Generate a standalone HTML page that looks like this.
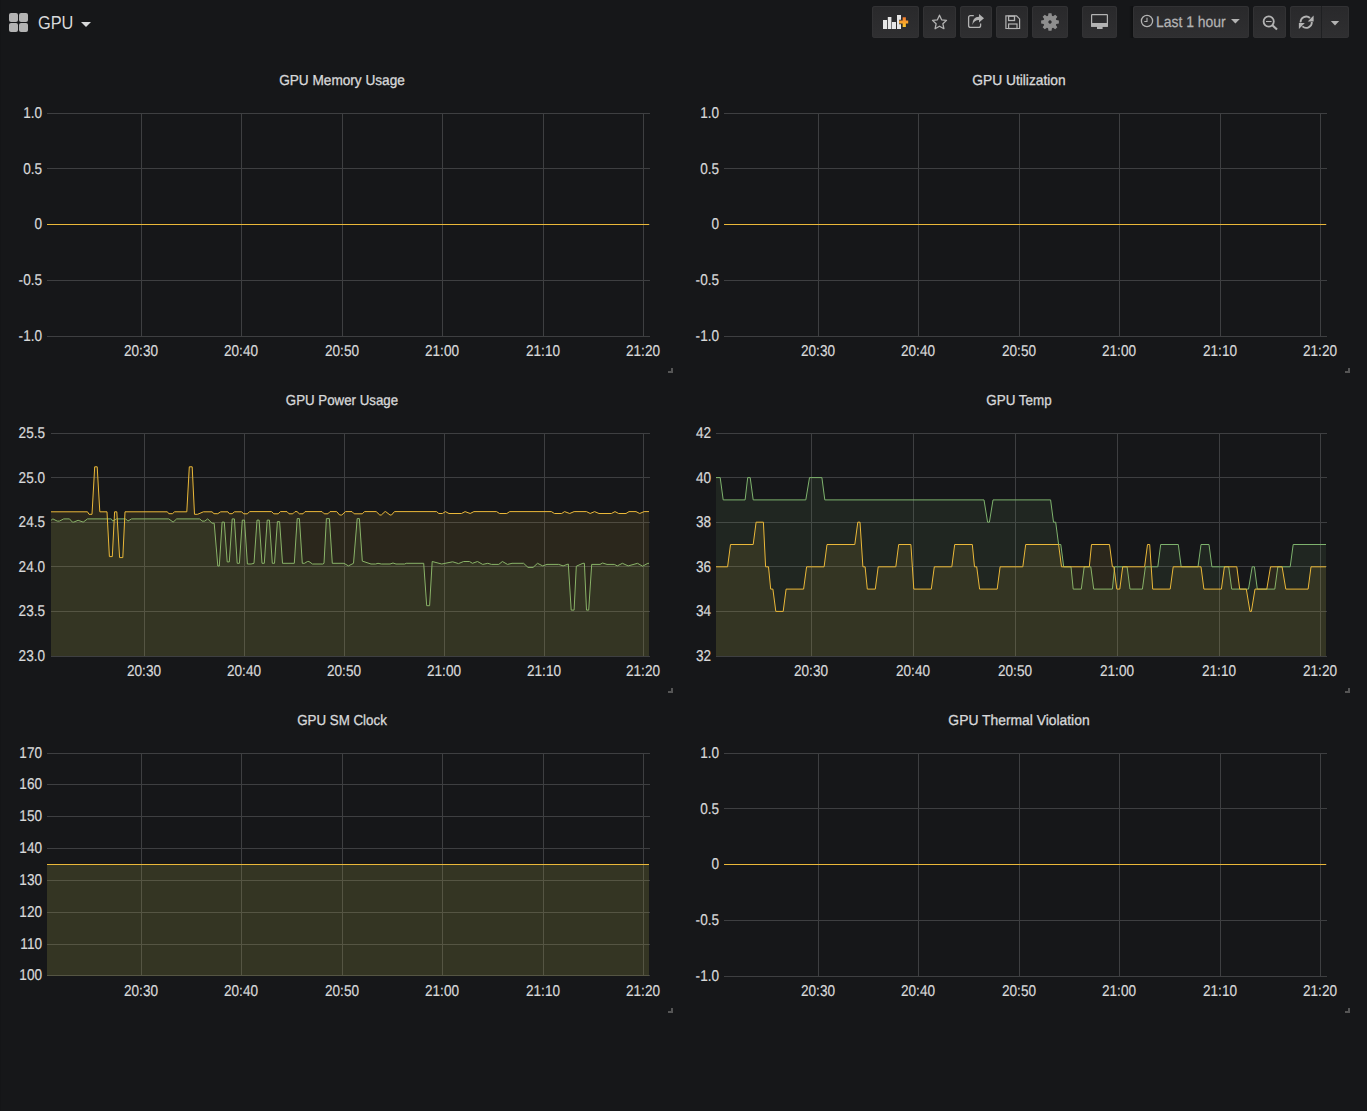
<!DOCTYPE html><html><head><meta charset="utf-8"><style>
html,body{margin:0;padding:0;background:#161719;width:1367px;height:1111px;overflow:hidden;font-family:"Liberation Sans",sans-serif;color:#d8d9da}
.a{position:absolute;white-space:nowrap}
.t{position:absolute;font-size:14.5px;font-weight:400;color:#d8d9da;transform:translateX(-50%) scaleX(0.925);white-space:nowrap;text-rendering:geometricPrecision;-webkit-text-stroke:0.3px #d8d9da;line-height:18px}
.yl{position:absolute;font-size:15.6px;color:#d8d9da;text-align:right;width:40px;line-height:16px;text-rendering:geometricPrecision;-webkit-text-stroke:0.2px #d8d9da;transform:scaleX(0.87);transform-origin:100% 50%}
.xl{position:absolute;font-size:15.6px;color:#d8d9da;width:60px;text-align:center;line-height:16px;text-rendering:geometricPrecision;-webkit-text-stroke:0.2px #d8d9da;transform:scaleX(0.87);transform-origin:50% 50%}
.btn{position:absolute;top:6px;height:32px;background:linear-gradient(#29292b,#2f2f31);border-radius:3px;box-shadow:inset 0 0 0 1px #323234}
.rh{position:absolute;width:5px;height:5px;border-right:2px solid #555;border-bottom:2px solid #555;box-sizing:border-box}
svg{position:absolute;left:0;top:0}

</style></head><body>
<div class="a" style="left:9px;top:13px;width:20px;height:20px">
<div style="position:absolute;left:0px;top:0px;width:9px;height:9px;background:#b3b3b3;border-radius:2px"></div>
<div style="position:absolute;left:10px;top:0px;width:9px;height:9px;background:#b3b3b3;border-radius:2px"></div>
<div style="position:absolute;left:0px;top:10px;width:9px;height:9px;background:#b3b3b3;border-radius:2px"></div>
<div style="position:absolute;left:10px;top:10px;width:9px;height:9px;background:#b3b3b3;border-radius:2px"></div>
</div>
<div class="a" style="left:38px;top:12px;font-size:19px;line-height:22px;color:#d8d9da;transform:scaleX(0.86);transform-origin:0 0">GPU</div>
<div class="a" style="left:81px;top:22px;width:0;height:0;border-left:5px solid transparent;border-right:5px solid transparent;border-top:5px solid #d8d9da"></div>
<div class="btn" style="left:872px;width:47px"></div>
<div class="btn" style="left:923px;width:33px"></div>
<div class="btn" style="left:960px;width:32px"></div>
<div class="btn" style="left:996px;width:32px"></div>
<div class="btn" style="left:1032px;width:36px"></div>
<div class="btn" style="left:1082px;width:35px"></div>
<div class="btn" style="left:1133px;width:116px"></div>
<div class="btn" style="left:1253px;width:33px"></div>
<div class="btn" style="left:1290px;width:59px"></div>
<div class="a" style="left:1129px;top:6px;width:4px;height:32px;background:linear-gradient(90deg,#161719,#0e0f10)"></div>
<div class="a" style="left:0;top:0;width:1px;height:1111px;background:#141517"></div>
<div class="a" style="left:1321px;top:6px;width:1px;height:32px;background:#1f2022"></div>
<div class="a" style="left:1156px;top:12.5px;font-size:15.4px;line-height:20px;color:#b3b3b3;text-rendering:geometricPrecision;-webkit-text-stroke:0.25px #b3b3b3;transform:scaleX(0.905);transform-origin:0 0">Last 1 hour</div>
<svg width="1367" height="1111" viewBox="0 0 1367 1111">
<defs><linearGradient id="pg" x1="0" y1="0" x2="0" y2="1"><stop offset="0" stop-color="#f47a2f"/><stop offset="1" stop-color="#fdc72b"/></linearGradient></defs>
<g fill="#e6e6e6"><rect x="883" y="20" width="4" height="9"/><rect x="887.8" y="17" width="3.6" height="12"/><rect x="892" y="22" width="4" height="7"/><rect x="897" y="15" width="4" height="14"/></g>
<path d="M904.25 17.2v9.7M899.1 22h9.1" stroke="#28282a" stroke-width="4.6"/>
<path d="M904.25 17.2v9.7M899.1 22h9.1" stroke="url(#pg)" stroke-width="3.2"/>
<path d="M939.5 15.2l2.1 4.6 4.9.6-3.6 3.4 1 4.9-4.4-2.5-4.4 2.5 1-4.9-3.6-3.4 4.9-.6z" fill="none" stroke="#b3b3b3" stroke-width="1.3" stroke-linejoin="round"/>
<path d="M973.8 15.6H970.6a2 2 0 0 0-2 2V25.4a2 2 0 0 0 2 2H978.6a2 2 0 0 0 2-2V23.6" fill="none" stroke="#b3b3b3" stroke-width="1.3"/>
<path d="M972.3 25Q972.3 17 979 16.8L979 14L984 18.3L979 22.4L979 19.9Q974.3 19.9 972.3 25Z" fill="#b3b3b3"/>
<path d="M1005.9 15.9H1016.6L1019.6 18.9V28.5H1005.9Z" fill="none" stroke="#b3b3b3" stroke-width="1.2"/>
<rect x="1008.6" y="16.2" width="5.9" height="4.3" fill="none" stroke="#b3b3b3" stroke-width="1.3"/><rect x="1008.6" y="24" width="8.4" height="4.5" fill="none" stroke="#b3b3b3" stroke-width="1.2"/>
<path d="M1056.31 20.05 L1058.87 20.48 L1058.87 23.52 L1056.31 23.95 L1055.84 25.08 L1057.35 27.20 L1055.20 29.35 L1053.08 27.84 L1051.95 28.31 L1051.52 30.87 L1048.48 30.87 L1048.05 28.31 L1046.92 27.84 L1044.80 29.35 L1042.65 27.20 L1044.16 25.08 L1043.69 23.95 L1041.13 23.52 L1041.13 20.48 L1043.69 20.05 L1044.16 18.92 L1042.65 16.80 L1044.80 14.65 L1046.92 16.16 L1048.05 15.69 L1048.48 13.13 L1051.52 13.13 L1051.95 15.69 L1053.08 16.16 L1055.20 14.65 L1057.35 16.80 L1055.84 18.92 z M1050 20.3a1.7 1.7 0 1 0 0.01 0z" fill="#8e8e8e" fill-rule="evenodd"/>
<rect x="1091.6" y="14.6" width="15.8" height="11.6" rx="0.6" fill="none" stroke="#b3b3b3" stroke-width="1.2"/><rect x="1091" y="23" width="17" height="3.8" fill="#b3b3b3"/><rect x="1097" y="26.5" width="5.6" height="2.5" fill="#b3b3b3"/>
<circle cx="1147" cy="21" r="5.6" fill="none" stroke="#b3b3b3" stroke-width="1.3"/><path d="M1147 17.8v3.7h-2.7" fill="none" stroke="#b3b3b3" stroke-width="1.1"/>
<path d="M1231 19.1h8.8l-4.4 4.5z" fill="#b3b3b3"/>
<circle cx="1268.7" cy="21.5" r="5.1" fill="none" stroke="#b3b3b3" stroke-width="1.8"/><path d="M1272.4 25.2l4.6 4.4" stroke="#b3b3b3" stroke-width="2.1"/><path d="M1266 21.5h5.6" stroke="#b3b3b3" stroke-width="1.1"/>
<path d="M1300.60 22.40A5.6 5.6 0 0 1 1309.95 18.04" fill="none" stroke="#b3b3b3" stroke-width="1.9"/><path d="M1313.6 15.5V21.4H1307.7z" fill="#b3b3b3"/>
<path d="M1311.80 22.00A5.6 5.6 0 0 1 1302.45 26.36" fill="none" stroke="#b3b3b3" stroke-width="1.9"/><path d="M1298.9 28.9V23H1304.8z" fill="#b3b3b3"/>
<path d="M1330.8 21h8.4l-4.2 4.4z" fill="#b3b3b3"/>
<path d="M47.0 113.5H650.0M47.0 168.5H650.0M47.0 224.5H650.0M47.0 280.5H650.0M47.0 336.5H650.0M141.5 113.0V337.0M241.5 113.0V337.0M342.5 113.0V337.0M442.5 113.0V337.0M543.5 113.0V337.0M643.5 113.0V337.0" stroke="#3e3f41" stroke-width="1" fill="none"/>
<path d="M47.0 224.5H649.0" stroke="#EAB839" stroke-width="1"/>
<path d="M724.0 113.5H1327.0M724.0 168.5H1327.0M724.0 224.5H1327.0M724.0 280.5H1327.0M724.0 336.5H1327.0M818.5 113.0V337.0M918.5 113.0V337.0M1019.5 113.0V337.0M1119.5 113.0V337.0M1220.5 113.0V337.0M1320.5 113.0V337.0" stroke="#3e3f41" stroke-width="1" fill="none"/>
<path d="M724.0 224.5H1326.0" stroke="#EAB839" stroke-width="1"/>
<path d="M51.0 433.5H650.0M51.0 477.5H650.0M51.0 522.5H650.0M51.0 566.5H650.0M51.0 611.5H650.0M51.0 656.5H650.0M144.5 433.0V657.0M244.5 433.0V657.0M344.5 433.0V657.0M444.5 433.0V657.0M544.5 433.0V657.0M643.5 433.0V657.0" stroke="#3e3f41" stroke-width="1" fill="none"/>
<path d="M51.0 656.0 L51.0,520.3 52.9,518.9 57.2,521.1 59.4,521.1 63.7,518.9 69.5,518.9 72.4,522.1 73.8,522.1 78.1,520.3 83.2,522.1 87.5,518.9 111.3,518.9 112.7,521.1 116.3,518.9 125.7,518.9 127.9,521.1 131.5,518.9 168.8,518.9 173.1,522.1 176.7,518.9 199.8,518.9 202.0,521.1 204.8,521.1 207.7,518.9 212.0,523.2 214.2,523.2 217.8,566.0 219.3,566.0 222.1,522.1 224.3,522.1 227.2,561.9 229.3,561.9 232.2,518.9 234.4,518.9 237.2,563.3 239.4,563.3 242.3,520.1 244.5,520.1 247.4,564.0 251.1,564.0 254.0,563.3 257.0,520.1 259.1,520.1 262.0,563.3 264.3,563.3 267.2,520.1 269.4,520.1 272.3,563.3 274.5,563.3 277.4,521.6 279.6,521.6 282.5,563.3 294.3,563.3 297.2,518.6 299.4,518.6 302.3,563.3 304.5,563.3 307.4,561.5 308.9,561.5 312.5,564.0 322.8,564.0 324.0,563.3 326.4,518.6 329.4,518.6 332.3,563.3 344.0,563.3 348.4,565.9 353.5,563.3 357.2,518.6 359.4,518.6 362.3,561.1 371.0,564.0 375.5,564.0 378.0,563.3 381.3,564.0 390.0,564.0 393.0,563.0 396.0,564.0 404.7,564.0 406.2,563.3 423.7,563.3 426.7,605.7 429.6,605.7 432.2,561.5 441.7,564.0 452.7,561.8 458.5,563.6 463.6,561.5 469.5,561.5 472.4,563.3 477.5,561.5 482.7,564.4 487.8,563.3 491.4,564.4 498.8,564.4 502.4,561.5 507.5,564.4 512.0,563.3 523.6,563.3 528.0,567.4 533.1,567.4 537.5,563.3 542.7,565.9 547.0,564.4 558.7,564.4 563.1,565.9 568.3,564.0 571.2,610.1 574.1,610.1 576.3,566.2 582.9,563.3 584.4,563.3 586.5,610.1 588.7,610.1 591.7,564.4 600.0,564.4 602.6,563.0 607.0,564.4 614.3,564.4 617.3,565.9 622.4,563.3 628.2,565.9 637.5,563.3 642.6,566.2 647.8,563.3 649.0,563.3 L649.0 656.0 Z" fill="rgba(126,178,109,0.1)"/>
<polyline points="51.0,520.3 52.9,518.9 57.2,521.1 59.4,521.1 63.7,518.9 69.5,518.9 72.4,522.1 73.8,522.1 78.1,520.3 83.2,522.1 87.5,518.9 111.3,518.9 112.7,521.1 116.3,518.9 125.7,518.9 127.9,521.1 131.5,518.9 168.8,518.9 173.1,522.1 176.7,518.9 199.8,518.9 202.0,521.1 204.8,521.1 207.7,518.9 212.0,523.2 214.2,523.2 217.8,566.0 219.3,566.0 222.1,522.1 224.3,522.1 227.2,561.9 229.3,561.9 232.2,518.9 234.4,518.9 237.2,563.3 239.4,563.3 242.3,520.1 244.5,520.1 247.4,564.0 251.1,564.0 254.0,563.3 257.0,520.1 259.1,520.1 262.0,563.3 264.3,563.3 267.2,520.1 269.4,520.1 272.3,563.3 274.5,563.3 277.4,521.6 279.6,521.6 282.5,563.3 294.3,563.3 297.2,518.6 299.4,518.6 302.3,563.3 304.5,563.3 307.4,561.5 308.9,561.5 312.5,564.0 322.8,564.0 324.0,563.3 326.4,518.6 329.4,518.6 332.3,563.3 344.0,563.3 348.4,565.9 353.5,563.3 357.2,518.6 359.4,518.6 362.3,561.1 371.0,564.0 375.5,564.0 378.0,563.3 381.3,564.0 390.0,564.0 393.0,563.0 396.0,564.0 404.7,564.0 406.2,563.3 423.7,563.3 426.7,605.7 429.6,605.7 432.2,561.5 441.7,564.0 452.7,561.8 458.5,563.6 463.6,561.5 469.5,561.5 472.4,563.3 477.5,561.5 482.7,564.4 487.8,563.3 491.4,564.4 498.8,564.4 502.4,561.5 507.5,564.4 512.0,563.3 523.6,563.3 528.0,567.4 533.1,567.4 537.5,563.3 542.7,565.9 547.0,564.4 558.7,564.4 563.1,565.9 568.3,564.0 571.2,610.1 574.1,610.1 576.3,566.2 582.9,563.3 584.4,563.3 586.5,610.1 588.7,610.1 591.7,564.4 600.0,564.4 602.6,563.0 607.0,564.4 614.3,564.4 617.3,565.9 622.4,563.3 628.2,565.9 637.5,563.3 642.6,566.2 647.8,563.3 649.0,563.3" fill="none" stroke="#7EB26D" stroke-width="1" stroke-linejoin="round"/>
<path d="M51.0 656.0 L51.0,511.8 87.5,511.8 89.0,514.3 92.0,514.3 94.7,466.8 97.2,466.8 99.8,511.8 107.0,511.8 109.4,556.6 112.3,556.6 114.6,511.8 116.8,511.8 119.6,557.6 122.8,557.6 125.0,511.8 167.4,511.8 168.8,513.7 172.4,513.7 174.6,511.8 186.8,511.8 189.3,466.8 192.2,466.8 194.5,514.3 197.6,514.3 203.4,511.8 212.0,511.8 214.0,513.7 217.8,513.7 220.7,511.8 227.9,511.8 229.3,513.7 232.2,513.7 234.5,511.8 241.5,511.8 243.8,513.8 247.4,513.8 249.6,511.6 271.6,511.6 273.8,513.8 278.2,513.8 280.4,511.6 287.0,511.6 289.0,513.8 292.8,513.8 295.0,511.6 297.0,511.6 299.4,513.8 303.0,513.8 305.0,511.6 322.0,511.6 324.2,513.8 327.9,513.8 330.0,511.6 336.7,511.6 339.6,515.0 341.8,515.0 345.5,511.6 352.0,511.6 354.2,513.8 362.3,513.8 364.5,511.6 376.2,511.6 379.8,515.0 381.3,515.0 385.0,511.6 385.7,511.6 390.0,515.0 391.5,515.0 394.5,511.6 436.6,511.6 438.8,513.5 442.4,513.5 445.4,511.6 449.0,513.5 461.5,513.5 465.1,511.6 470.2,513.5 473.9,511.6 496.6,511.6 499.5,513.5 506.8,513.5 509.7,511.6 551.4,511.6 554.4,513.5 561.7,513.5 564.6,511.6 569.7,513.5 574.1,511.6 586.5,511.6 590.2,513.5 594.6,511.6 599.0,513.5 611.4,513.5 615.0,511.6 618.7,513.5 626.0,513.5 629.0,511.6 636.0,511.6 639.7,513.5 644.1,511.6 649.0,511.6 L649.0 656.0 Z" fill="rgba(234,184,57,0.1)"/>
<polyline points="51.0,511.8 87.5,511.8 89.0,514.3 92.0,514.3 94.7,466.8 97.2,466.8 99.8,511.8 107.0,511.8 109.4,556.6 112.3,556.6 114.6,511.8 116.8,511.8 119.6,557.6 122.8,557.6 125.0,511.8 167.4,511.8 168.8,513.7 172.4,513.7 174.6,511.8 186.8,511.8 189.3,466.8 192.2,466.8 194.5,514.3 197.6,514.3 203.4,511.8 212.0,511.8 214.0,513.7 217.8,513.7 220.7,511.8 227.9,511.8 229.3,513.7 232.2,513.7 234.5,511.8 241.5,511.8 243.8,513.8 247.4,513.8 249.6,511.6 271.6,511.6 273.8,513.8 278.2,513.8 280.4,511.6 287.0,511.6 289.0,513.8 292.8,513.8 295.0,511.6 297.0,511.6 299.4,513.8 303.0,513.8 305.0,511.6 322.0,511.6 324.2,513.8 327.9,513.8 330.0,511.6 336.7,511.6 339.6,515.0 341.8,515.0 345.5,511.6 352.0,511.6 354.2,513.8 362.3,513.8 364.5,511.6 376.2,511.6 379.8,515.0 381.3,515.0 385.0,511.6 385.7,511.6 390.0,515.0 391.5,515.0 394.5,511.6 436.6,511.6 438.8,513.5 442.4,513.5 445.4,511.6 449.0,513.5 461.5,513.5 465.1,511.6 470.2,513.5 473.9,511.6 496.6,511.6 499.5,513.5 506.8,513.5 509.7,511.6 551.4,511.6 554.4,513.5 561.7,513.5 564.6,511.6 569.7,513.5 574.1,511.6 586.5,511.6 590.2,513.5 594.6,511.6 599.0,513.5 611.4,513.5 615.0,511.6 618.7,513.5 626.0,513.5 629.0,511.6 636.0,511.6 639.7,513.5 644.1,511.6 649.0,511.6" fill="none" stroke="#EAB839" stroke-width="1" stroke-linejoin="round"/>
<path d="M716.0 433.5H1327.0M716.0 477.5H1327.0M716.0 522.5H1327.0M716.0 566.5H1327.0M716.0 611.5H1327.0M716.0 656.5H1327.0M811.5 433.0V657.0M913.5 433.0V657.0M1015.5 433.0V657.0M1117.5 433.0V657.0M1219.5 433.0V657.0M1320.5 433.0V657.0" stroke="#3e3f41" stroke-width="1" fill="none"/>
<path d="M716.0 656.0 L716.0,477.6 720.2,477.6 723.2,499.9 745.1,499.9 747.7,477.6 750.2,477.6 753.2,499.9 805.8,499.9 809.5,477.6 821.9,477.6 824.8,499.9 984.0,499.9 987.6,522.2 989.4,522.2 993.0,499.9 1050.6,499.9 1053.5,522.2 1055.7,522.2 1058.6,544.5 1060.8,544.5 1063.7,566.8 1071.0,566.8 1073.2,589.1 1081.3,589.1 1084.2,566.8 1090.8,566.8 1093.7,589.1 1112.4,589.1 1114.6,566.8 1127.1,566.8 1130.0,589.1 1142.4,589.1 1145.4,566.8 1157.8,566.8 1160.7,544.5 1178.3,544.5 1181.2,566.8 1198.0,566.8 1201.0,544.5 1209.0,544.5 1211.9,566.8 1228.7,566.8 1231.7,589.1 1248.5,589.1 1252.2,566.8 1254.4,566.8 1257.3,589.1 1274.8,589.1 1277.8,566.8 1290.2,566.8 1293.2,544.5 1326.0,544.5 L1326.0 656.0 Z" fill="rgba(126,178,109,0.1)"/>
<polyline points="716.0,477.6 720.2,477.6 723.2,499.9 745.1,499.9 747.7,477.6 750.2,477.6 753.2,499.9 805.8,499.9 809.5,477.6 821.9,477.6 824.8,499.9 984.0,499.9 987.6,522.2 989.4,522.2 993.0,499.9 1050.6,499.9 1053.5,522.2 1055.7,522.2 1058.6,544.5 1060.8,544.5 1063.7,566.8 1071.0,566.8 1073.2,589.1 1081.3,589.1 1084.2,566.8 1090.8,566.8 1093.7,589.1 1112.4,589.1 1114.6,566.8 1127.1,566.8 1130.0,589.1 1142.4,589.1 1145.4,566.8 1157.8,566.8 1160.7,544.5 1178.3,544.5 1181.2,566.8 1198.0,566.8 1201.0,544.5 1209.0,544.5 1211.9,566.8 1228.7,566.8 1231.7,589.1 1248.5,589.1 1252.2,566.8 1254.4,566.8 1257.3,589.1 1274.8,589.1 1277.8,566.8 1290.2,566.8 1293.2,544.5 1326.0,544.5" fill="none" stroke="#7EB26D" stroke-width="1" stroke-linejoin="round"/>
<path d="M716.0 656.0 L716.0,566.8 727.6,566.8 730.5,544.5 753.2,544.5 756.1,522.2 763.4,522.2 765.6,566.8 768.5,566.8 770.7,589.1 772.9,589.1 775.8,611.4 783.2,611.4 786.1,589.1 803.6,589.1 806.6,566.8 824.1,566.8 827.0,544.5 854.8,544.5 857.8,522.2 860.0,522.2 862.9,566.8 865.1,566.8 867.3,589.1 875.3,589.1 878.2,566.8 895.8,566.8 898.7,544.5 910.9,544.5 913.8,589.1 931.3,589.1 934.3,566.8 951.8,566.8 954.7,544.5 972.3,544.5 974.5,566.8 976.7,566.8 979.6,589.1 997.2,589.1 1000.1,566.8 1022.8,566.8 1025.7,544.5 1058.6,544.5 1061.5,566.8 1089.3,566.8 1091.5,544.5 1109.5,544.5 1112.4,566.8 1113.9,566.8 1116.8,589.1 1119.8,589.1 1122.7,566.8 1144.6,566.8 1147.5,544.5 1149.7,544.5 1151.2,566.8 1152.7,589.1 1170.2,589.1 1173.2,566.8 1201.0,566.8 1203.9,589.1 1221.4,589.1 1224.4,566.8 1236.8,566.8 1239.7,589.1 1246.3,589.1 1250.0,611.4 1251.4,611.4 1255.0,589.1 1266.8,589.1 1270.5,566.8 1282.1,566.8 1285.8,589.1 1308.1,589.1 1311.0,566.8 1326.0,566.8 L1326.0 656.0 Z" fill="rgba(234,184,57,0.1)"/>
<polyline points="716.0,566.8 727.6,566.8 730.5,544.5 753.2,544.5 756.1,522.2 763.4,522.2 765.6,566.8 768.5,566.8 770.7,589.1 772.9,589.1 775.8,611.4 783.2,611.4 786.1,589.1 803.6,589.1 806.6,566.8 824.1,566.8 827.0,544.5 854.8,544.5 857.8,522.2 860.0,522.2 862.9,566.8 865.1,566.8 867.3,589.1 875.3,589.1 878.2,566.8 895.8,566.8 898.7,544.5 910.9,544.5 913.8,589.1 931.3,589.1 934.3,566.8 951.8,566.8 954.7,544.5 972.3,544.5 974.5,566.8 976.7,566.8 979.6,589.1 997.2,589.1 1000.1,566.8 1022.8,566.8 1025.7,544.5 1058.6,544.5 1061.5,566.8 1089.3,566.8 1091.5,544.5 1109.5,544.5 1112.4,566.8 1113.9,566.8 1116.8,589.1 1119.8,589.1 1122.7,566.8 1144.6,566.8 1147.5,544.5 1149.7,544.5 1151.2,566.8 1152.7,589.1 1170.2,589.1 1173.2,566.8 1201.0,566.8 1203.9,589.1 1221.4,589.1 1224.4,566.8 1236.8,566.8 1239.7,589.1 1246.3,589.1 1250.0,611.4 1251.4,611.4 1255.0,589.1 1266.8,589.1 1270.5,566.8 1282.1,566.8 1285.8,589.1 1308.1,589.1 1311.0,566.8 1326.0,566.8" fill="none" stroke="#EAB839" stroke-width="1" stroke-linejoin="round"/>
<path d="M47.0 753.5H650.0M47.0 784.5H650.0M47.0 816.5H650.0M47.0 848.5H650.0M47.0 880.5H650.0M47.0 912.5H650.0M47.0 944.5H650.0M47.0 975.5H650.0M141.5 753.0V976.0M241.5 753.0V976.0M342.5 753.0V976.0M442.5 753.0V976.0M543.5 753.0V976.0M643.5 753.0V976.0" stroke="#3e3f41" stroke-width="1" fill="none"/>
<rect x="47.0" y="864.5" width="602.0" height="111.5" fill="rgba(126,178,109,0.1)"/>
<rect x="47.0" y="864.5" width="602.0" height="111.5" fill="rgba(234,184,57,0.1)"/>
<path d="M47.0 864.5H649.0" stroke="#EAB839" stroke-width="1"/>
<path d="M724.0 753.5H1327.0M724.0 808.5H1327.0M724.0 864.5H1327.0M724.0 920.5H1327.0M724.0 976.5H1327.0M818.5 753.0V977.0M918.5 753.0V977.0M1019.5 753.0V977.0M1119.5 753.0V977.0M1220.5 753.0V977.0M1320.5 753.0V977.0" stroke="#3e3f41" stroke-width="1" fill="none"/>
<path d="M724.0 864.5H1326.0" stroke="#EAB839" stroke-width="1"/>
</svg>
<div class="t" style="left:342.2px;top:71.5px;transform:translateX(-50%) scaleX(0.940)">GPU Memory Usage</div>
<div class="yl" style="left:1.5px;top:105.9px">1.0</div>
<div class="yl" style="left:1.5px;top:161.7px">0.5</div>
<div class="yl" style="left:1.5px;top:217.4px">0</div>
<div class="yl" style="left:1.5px;top:273.1px">-0.5</div>
<div class="yl" style="left:1.5px;top:328.9px">-1.0</div>
<div class="xl" style="left:110.90px;top:344.30px">20:30</div>
<div class="xl" style="left:210.90px;top:344.30px">20:40</div>
<div class="xl" style="left:311.90px;top:344.30px">20:50</div>
<div class="xl" style="left:411.90px;top:344.30px">21:00</div>
<div class="xl" style="left:512.90px;top:344.30px">21:10</div>
<div class="xl" style="left:612.90px;top:344.30px">21:20</div>
<div class="t" style="left:1019.2px;top:71.5px;transform:translateX(-50%) scaleX(0.949)">GPU Utilization</div>
<div class="yl" style="left:678.5px;top:105.9px">1.0</div>
<div class="yl" style="left:678.5px;top:161.7px">0.5</div>
<div class="yl" style="left:678.5px;top:217.4px">0</div>
<div class="yl" style="left:678.5px;top:273.1px">-0.5</div>
<div class="yl" style="left:678.5px;top:328.9px">-1.0</div>
<div class="xl" style="left:787.90px;top:344.30px">20:30</div>
<div class="xl" style="left:887.90px;top:344.30px">20:40</div>
<div class="xl" style="left:988.90px;top:344.30px">20:50</div>
<div class="xl" style="left:1088.90px;top:344.30px">21:00</div>
<div class="xl" style="left:1189.90px;top:344.30px">21:10</div>
<div class="xl" style="left:1289.90px;top:344.30px">21:20</div>
<div class="t" style="left:342.2px;top:391.5px;transform:translateX(-50%) scaleX(0.917)">GPU Power Usage</div>
<div class="yl" style="left:5.0px;top:425.9px">25.5</div>
<div class="yl" style="left:5.0px;top:470.5px">25.0</div>
<div class="yl" style="left:5.0px;top:515.1px">24.5</div>
<div class="yl" style="left:5.0px;top:559.7px">24.0</div>
<div class="yl" style="left:5.0px;top:604.3px">23.5</div>
<div class="yl" style="left:5.0px;top:648.9px">23.0</div>
<div class="xl" style="left:113.90px;top:664.30px">20:30</div>
<div class="xl" style="left:213.90px;top:664.30px">20:40</div>
<div class="xl" style="left:313.90px;top:664.30px">20:50</div>
<div class="xl" style="left:413.90px;top:664.30px">21:00</div>
<div class="xl" style="left:513.90px;top:664.30px">21:10</div>
<div class="xl" style="left:612.90px;top:664.30px">21:20</div>
<div class="t" style="left:1019.2px;top:391.5px;transform:translateX(-50%) scaleX(0.925)">GPU Temp</div>
<div class="yl" style="left:671.0px;top:425.9px">42</div>
<div class="yl" style="left:671.0px;top:470.5px">40</div>
<div class="yl" style="left:671.0px;top:515.1px">38</div>
<div class="yl" style="left:671.0px;top:559.7px">36</div>
<div class="yl" style="left:671.0px;top:604.3px">34</div>
<div class="yl" style="left:671.0px;top:648.9px">32</div>
<div class="xl" style="left:780.90px;top:664.30px">20:30</div>
<div class="xl" style="left:882.90px;top:664.30px">20:40</div>
<div class="xl" style="left:984.90px;top:664.30px">20:50</div>
<div class="xl" style="left:1086.90px;top:664.30px">21:00</div>
<div class="xl" style="left:1188.90px;top:664.30px">21:10</div>
<div class="xl" style="left:1289.90px;top:664.30px">21:20</div>
<div class="t" style="left:342.2px;top:711.5px;transform:translateX(-50%) scaleX(0.920)">GPU SM Clock</div>
<div class="yl" style="left:1.5px;top:745.9px">170</div>
<div class="yl" style="left:1.5px;top:776.9px">160</div>
<div class="yl" style="left:1.5px;top:808.9px">150</div>
<div class="yl" style="left:1.5px;top:840.9px">140</div>
<div class="yl" style="left:1.5px;top:872.9px">130</div>
<div class="yl" style="left:1.5px;top:904.9px">120</div>
<div class="yl" style="left:1.5px;top:936.9px">110</div>
<div class="yl" style="left:1.5px;top:967.9px">100</div>
<div class="xl" style="left:110.90px;top:984.30px">20:30</div>
<div class="xl" style="left:210.90px;top:984.30px">20:40</div>
<div class="xl" style="left:311.90px;top:984.30px">20:50</div>
<div class="xl" style="left:411.90px;top:984.30px">21:00</div>
<div class="xl" style="left:512.90px;top:984.30px">21:10</div>
<div class="xl" style="left:612.90px;top:984.30px">21:20</div>
<div class="t" style="left:1019.2px;top:711.5px;transform:translateX(-50%) scaleX(0.956)">GPU Thermal Violation</div>
<div class="yl" style="left:678.5px;top:745.9px">1.0</div>
<div class="yl" style="left:678.5px;top:801.6px">0.5</div>
<div class="yl" style="left:678.5px;top:857.4px">0</div>
<div class="yl" style="left:678.5px;top:913.1px">-0.5</div>
<div class="yl" style="left:678.5px;top:968.9px">-1.0</div>
<div class="xl" style="left:787.90px;top:984.30px">20:30</div>
<div class="xl" style="left:887.90px;top:984.30px">20:40</div>
<div class="xl" style="left:988.90px;top:984.30px">20:50</div>
<div class="xl" style="left:1088.90px;top:984.30px">21:00</div>
<div class="xl" style="left:1189.90px;top:984.30px">21:10</div>
<div class="xl" style="left:1289.90px;top:984.30px">21:20</div>
<div class="rh" style="left:668px;top:368px"></div>
<div class="rh" style="left:1345px;top:368px"></div>
<div class="rh" style="left:668px;top:688px"></div>
<div class="rh" style="left:1345px;top:688px"></div>
<div class="rh" style="left:668px;top:1008px"></div>
<div class="rh" style="left:1345px;top:1008px"></div>
</body></html>
